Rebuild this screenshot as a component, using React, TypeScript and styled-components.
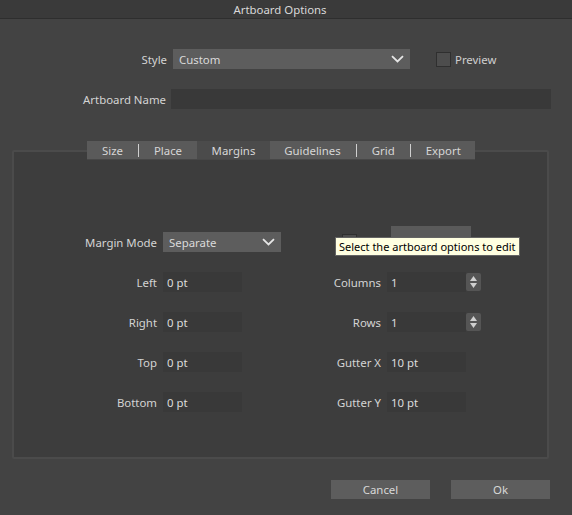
import styled, { createGlobalStyle } from "styled-components";

const GlobalStyle = createGlobalStyle`
  html, body {
    margin: 0;
    padding: 0;
    background: #434343;
  }
  body {
    font-family: "Noto Sans", "Open Sans", sans-serif;
    font-size: 11.4px;
    color: #d4d4d4;
  }
`;

const Window = styled.div`
  width: 572px;
  height: 515px;
  background: #434343;
  display: flex;
  flex-direction: column;
  position: relative;
  overflow: hidden;
`;

const TitleBar = styled.div`
  height: 18px;
  background: #3a3a3a;
  border-bottom: 1px solid #2e2e2e;
  display: flex;
  align-items: center;
  justify-content: center;
  padding-right: 12px;
  color: #d8d8d8;
`;

const Body = styled.div`
  display: flex;
  flex-direction: column;
  padding-top: 30px;
`;

const FormRow = styled.div<{ $top?: number }>`
  display: flex;
  align-items: center;
  height: 20px;
  margin-top: ${(p) => p.$top ?? 0}px;
`;

const RowLabel = styled.span<{ $w: number }>`
  width: ${(p) => p.$w}px;
  text-align: right;
  white-space: nowrap;
  color: #d4d4d4;
`;

const Select = styled.div<{ $w: number }>`
  width: ${(p) => p.$w}px;
  height: 20px;
  box-sizing: border-box;
  background: #5d5d5d;
  display: flex;
  align-items: center;
  justify-content: space-between;
  padding: 0 6px;
  color: #dadada;
`;

const TextField = styled.div<{ $w: number }>`
  width: ${(p) => p.$w}px;
  height: 20px;
  box-sizing: border-box;
  background: #393939;
  display: flex;
  align-items: center;
  padding-left: 4px;
  color: #dcdcdc;
`;

const CheckBox = styled.span`
  width: 15px;
  height: 15px;
  box-sizing: border-box;
  background: #4d4d4d;
  border: 1px solid #2f2f2f;
  display: inline-block;
`;

const CheckLabel = styled.label`
  display: flex;
  align-items: center;
  gap: 4px;
  margin-left: 26px;
  color: #cfcfcf;
`;

const Group = styled.div`
  margin: 41px 0 0 12px;
  width: 537px;
  height: 309px;
  box-sizing: border-box;
  border: 2px solid #4b4b4b;
  border-radius: 2px;
  background: #3d3d3d;
  display: flex;
  flex-direction: column;
`;

const TabStrip = styled.div`
  display: flex;
  margin: -11px 0 0 73px;
  height: 19px;
`;

const Tab = styled.div<{ $w: number; $active?: boolean }>`
  width: ${(p) => p.$w}px;
  height: 19px;
  box-sizing: border-box;
  background: ${(p) => (p.$active ? "#4b4b4b" : "#5a5a5a")};
  border-bottom: 1px solid #474747;
  display: flex;
  align-items: center;
  justify-content: center;
  gap: 15px;
  color: #d6d6d6;
`;

const TabSep = styled.span`
  width: 1px;
  height: 13px;
  background: #cfcfcf;
`;

const FieldGrid = styled.div`
  display: grid;
  grid-template-columns: 143px 118px 94px 100px;
  grid-auto-rows: 20px;
  column-gap: 6px;
  row-gap: 20px;
  margin-top: 72px;
  align-items: center;
`;

const GridLabel = styled.span`
  text-align: right;
  white-space: nowrap;
  color: #d4d4d4;
`;

const CheckCell = styled.div`
  display: flex;
  justify-content: flex-end;
  padding-right: 24px;
  align-self: start;
  margin-top: 2px;
`;

const GhostButton = styled.div`
  width: 80px;
  height: 28px;
  margin: -6px 0 0 4px;
  background: #5a5a5a;
  align-self: start;
`;

const SpinField = styled.div`
  display: flex;
`;

const Spinner = styled.div`
  width: 15px;
  height: 18px;
  margin-top: 1px;
  background: #555555;
  border-radius: 2px;
  display: flex;
  flex-direction: column;
  align-items: center;
  justify-content: center;
  gap: 2px;
`;

const Tooltip = styled.div`
  position: absolute;
  left: 335px;
  top: 237px;
  height: 19px;
  box-sizing: border-box;
  padding: 0 3px;
  background: #ffffe1;
  border: 1px solid #646464;
  color: #000000;
  font-size: 11px;
  display: flex;
  align-items: center;
  white-space: nowrap;
`;

const Footer = styled.div`
  display: flex;
  justify-content: flex-end;
  gap: 21px;
  padding: 21px 22px 0 0;
`;

const Button = styled.div`
  width: 99px;
  height: 19px;
  background: #5d5d5d;
  color: #d8d8d8;
  display: flex;
  align-items: center;
  justify-content: center;
`;

const Chevron = () => (
  <svg width="13" height="8" viewBox="0 0 13 8">
    <path d="M1 1.2 L6.5 6.5 L12 1.2" fill="none" stroke="#e6e6e6" strokeWidth="1.8" />
  </svg>
);

const Arrows = () => (
  <>
    <svg width="7" height="5" viewBox="0 0 7 5">
      <path d="M3.5 0 L7 5 L0 5 Z" fill="#d0d0d0" />
    </svg>
    <svg width="7" height="5" viewBox="0 0 7 5">
      <path d="M0 0 L7 0 L3.5 5 Z" fill="#d0d0d0" />
    </svg>
  </>
);

const marginRows = [
  { left: "Left", lval: "0 pt", right: "Columns", rval: "1", spin: true },
  { left: "Right", lval: "0 pt", right: "Rows", rval: "1", spin: true },
  { left: "Top", lval: "0 pt", right: "Gutter X", rval: "10 pt" },
  { left: "Bottom", lval: "0 pt", right: "Gutter Y", rval: "10 pt" },
];

export default function App() {
  return (
    <>
      <GlobalStyle />
      <Window>
        <TitleBar>Artboard Options</TitleBar>
        <Body>
          <FormRow>
            <RowLabel $w={167}>Style</RowLabel>
            <Select $w={237} style={{ marginLeft: 6 }}>
              Custom
              <Chevron />
            </Select>
            <CheckLabel>
              <CheckBox />
              Preview
            </CheckLabel>
          </FormRow>
          <FormRow $top={20}>
            <RowLabel $w={166}>Artboard Name</RowLabel>
            <TextField $w={380} style={{ marginLeft: 5 }} />
          </FormRow>

          <Group>
            <TabStrip>
              <Tab $w={110}>
                <span>Size</span>
                <TabSep />
                <span>Place</span>
              </Tab>
              <Tab $w={73} $active>
                <span>Margins</span>
              </Tab>
              <Tab $w={205}>
                <span>Guidelines</span>
                <TabSep />
                <span>Grid</span>
                <TabSep />
                <span>Export</span>
              </Tab>
            </TabStrip>

            <FieldGrid>
              <GridLabel>Margin Mode</GridLabel>
              <Select $w={118}>
                Separate
                <Chevron />
              </Select>
              <CheckCell>
                <CheckBox />
              </CheckCell>
              <GhostButton />

              {marginRows.map((r) => (
                <>
                  <GridLabel key={r.left}>{r.left}</GridLabel>
                  <TextField $w={79}>{r.lval}</TextField>
                  <GridLabel>{r.right}</GridLabel>
                  {r.spin ? (
                    <SpinField>
                      <TextField $w={79}>{r.rval}</TextField>
                      <Spinner>
                        <Arrows />
                      </Spinner>
                    </SpinField>
                  ) : (
                    <TextField $w={79}>{r.rval}</TextField>
                  )}
                </>
              ))}
            </FieldGrid>
          </Group>

          <Footer>
            <Button>Cancel</Button>
            <Button>Ok</Button>
          </Footer>
        </Body>
        <Tooltip>Select the artboard options to edit</Tooltip>
      </Window>
    </>
  );
}
